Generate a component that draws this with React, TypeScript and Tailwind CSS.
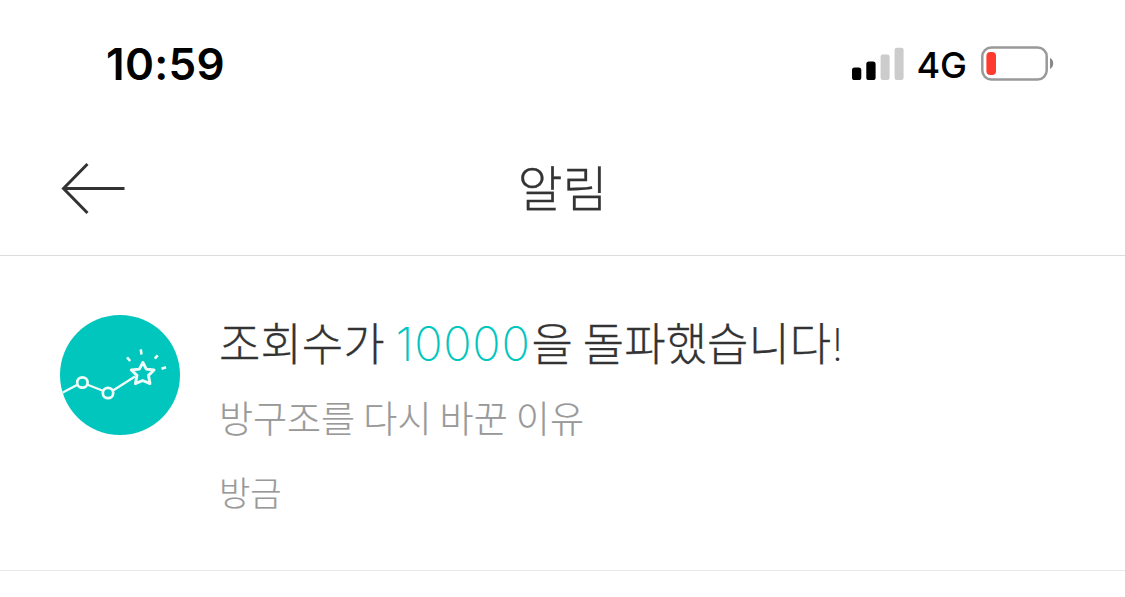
const notification = {
  before: "조회수가",
  count: "10000",
  after: "을 돌파했습니다",
  article: "방구조를 다시 바꾼 이유",
  time: "방금",
};

function SignalIcon() {
  return (
    <svg width="52" height="34" viewBox="0 0 52 34" aria-hidden="true">
      <rect x="0" y="20.5" width="9.3" height="12.5" rx="2.6" fill="#000" />
      <rect x="14.3" y="14.5" width="9.3" height="18.5" rx="2.6" fill="#000" />
      <rect x="28.6" y="7.5" width="9" height="25.5" rx="2.2" fill="#ccc" />
      <rect x="42.6" y="0.7" width="9" height="32.3" rx="2.2" fill="#ccc" />
    </svg>
  );
}

function BatteryIcon() {
  return (
    <svg width="73" height="36" viewBox="0 0 73 36" aria-hidden="true">
      <rect x="1.3" y="1.6" width="64.4" height="31.8" rx="9" fill="none" stroke="#999" strokeWidth="2.5" />
      <rect x="5.4" y="6" width="9.6" height="23" rx="4" fill="#ff3b30" />
      <path d="M69 12.1c2 .8 3.2 2.9 3.2 5.400s-1.200 4.600-3.200 5.400z" fill="#888" />
    </svg>
  );
}

function BackIcon() {
  return (
    <svg width="66" height="54" viewBox="0 0 66 54" fill="none" stroke="#333" strokeWidth="3" aria-hidden="true">
      <path d="M27.500 2 3.500 26.500 27.500 51M3.500 26.500H64.500" />
    </svg>
  );
}

function MilestoneIcon() {
  return (
    <svg className="size-[120px] shrink-0" viewBox="0 0 120 120" fill="none" stroke="#effcfa" aria-hidden="true">
      <circle cx="60" cy="60" r="60" fill="#00c6be" stroke="none" />
      <path d="M2.700 77.500 17.500 69.800M27 69.500 43.500 76M53 75.500 75 61.500" strokeWidth="2.400" />
      <circle cx="22.400" cy="67.500" r="5.200" strokeWidth="2.700" />
      <circle cx="48" cy="78" r="5.200" strokeWidth="2.700" />
      <path
        d="M82.900 47.500 86.300 54.100 94 55 88.500 60.400 90 68.600 82.700 65.500 75.400 68.600 77 60.400 71.300 55 79.300 54.100Z"
        strokeWidth="2.900"
        strokeLinejoin="round"
      />
      <path d="M67 42.300 70.200 46M80.800 34.300 81.500 39.500M97.700 40.300 94.800 43.600M106 52.300 101.500 53.800" strokeWidth="2.600" />
    </svg>
  );
}

function StatusBar() {
  return (
    <div className="flex h-32 items-center pl-[106px] pr-[71px] font-['Inter',sans-serif] text-black">
      <span className="text-[44px] font-semibold leading-none tracking-[0.3px]">10:59</span>
      <div className="ml-auto flex items-center">
        <SignalIcon />
        <span className="ml-3 mr-3.5 mt-px text-[36px] font-medium leading-none">4G</span>
        <BatteryIcon />
      </div>
    </div>
  );
}

export default function App() {
  return (
    <div className="h-[597px] w-[1125px] overflow-hidden bg-white font-['Noto_Sans_CJK_KR',sans-serif] text-[#333]">
      <StatusBar />
      <header className="grid h-32 grid-cols-[1fr_auto_1fr] items-center border-b border-[#ddd] px-[60px] pb-1.5">
        <button aria-label="뒤로" className="justify-self-start">
          <BackIcon />
        </button>
        <h1 className="pb-1.5 text-[49px] font-light leading-none [-webkit-text-stroke:0.3px]">알림</h1>
      </header>
      <article className="flex h-[315px] gap-[39px] border-b border-[#e8e8e8] pl-[60px] pt-[59px]">
        <MilestoneIcon />
        <div>
          <p className="flex h-[54px] items-center whitespace-pre text-[45px] font-light leading-none">
            <span className="pb-0.5 [-webkit-text-stroke:0.3px]">{notification.before} </span>
            <span className="ml-px mr-px pt-0.5 font-['Inter',sans-serif] text-[47px] font-extralight tracking-[0.7px] text-[#00c6be]">
              {notification.count}
            </span>
            <span className="pb-0.5 [-webkit-text-stroke:0.3px]">{notification.after}</span>
            <span className="pt-1 font-['Inter',sans-serif] font-extralight">!</span>
          </p>
          <p className="mt-[21px] text-[37px] font-light leading-[54px] text-[#999] [-webkit-text-stroke:0.2px]">
            {notification.article}
          </p>
          <p className="mt-[23px] text-[34px] font-light leading-[50px] text-[#999] [-webkit-text-stroke:0.2px]">
            {notification.time}
          </p>
        </div>
      </article>
    </div>
  );
}
